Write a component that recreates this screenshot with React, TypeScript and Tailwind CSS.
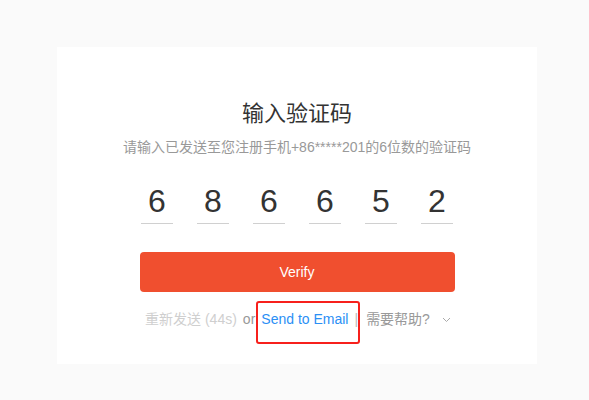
const digits = ["6", "8", "6", "6", "5", "2"];

export default function App() {
  return (
    <div
      className="min-h-screen bg-[#fafafa] pt-[47px]"
      style={{ fontFamily: '"Liberation Sans", "Noto Sans CJK SC", sans-serif' }}
    >
      <div className="ml-[57px] w-[480px] h-[317px] bg-white flex flex-col items-center pt-[52px]">
        <h1 className="text-[22px] leading-[30px] text-[#333] font-normal">输入验证码</h1>
        <p className="mt-[8px] text-[14px] leading-[20px] text-[#999]">
          请输入已发送至您注册手机+86*****201的6位数的验证码
        </p>

        <div className="mt-[24px] flex gap-[24px]">
          {digits.map((d, i) => (
            <div
              key={i}
              className="w-[32px] text-center text-[32px] leading-[40px] pb-[2px] text-[#333] border-b border-[#d0d0d0]"
            >
              {d}
            </div>
          ))}
        </div>

        <button className="mt-[28px] w-[315px] h-[40px] rounded-[4px] bg-[#f04f2f] text-white text-[14px]">
          Verify
        </button>

        <div className="mt-[17px] flex items-center text-[14px] leading-[20px] pl-[2px]">
          <span className="text-[#cfcfcf]">重新发送 (44s)</span>
          <span className="ml-[6px] text-[#999]">or</span>
          <span className="relative ml-[6px] text-[#2b8ff5]">
            Send to Email
            <span className="absolute left-[-5px] top-[-8px] w-[104px] h-[43px] border-2 border-[#f7201c] rounded-[3px]" />
          </span>
          <span className="ml-[6px] text-[#bbb]">|</span>
          <span className="ml-[8px] text-[#999]">需要帮助?</span>
          <svg className="ml-[12px] mt-[2px]" width="9" height="6" viewBox="0 0 9 6" fill="none">
            <path d="M1 1l3.5 3.5L8 1" stroke="#aaa" strokeWidth="1" />
          </svg>
        </div>
      </div>
    </div>
  );
}
